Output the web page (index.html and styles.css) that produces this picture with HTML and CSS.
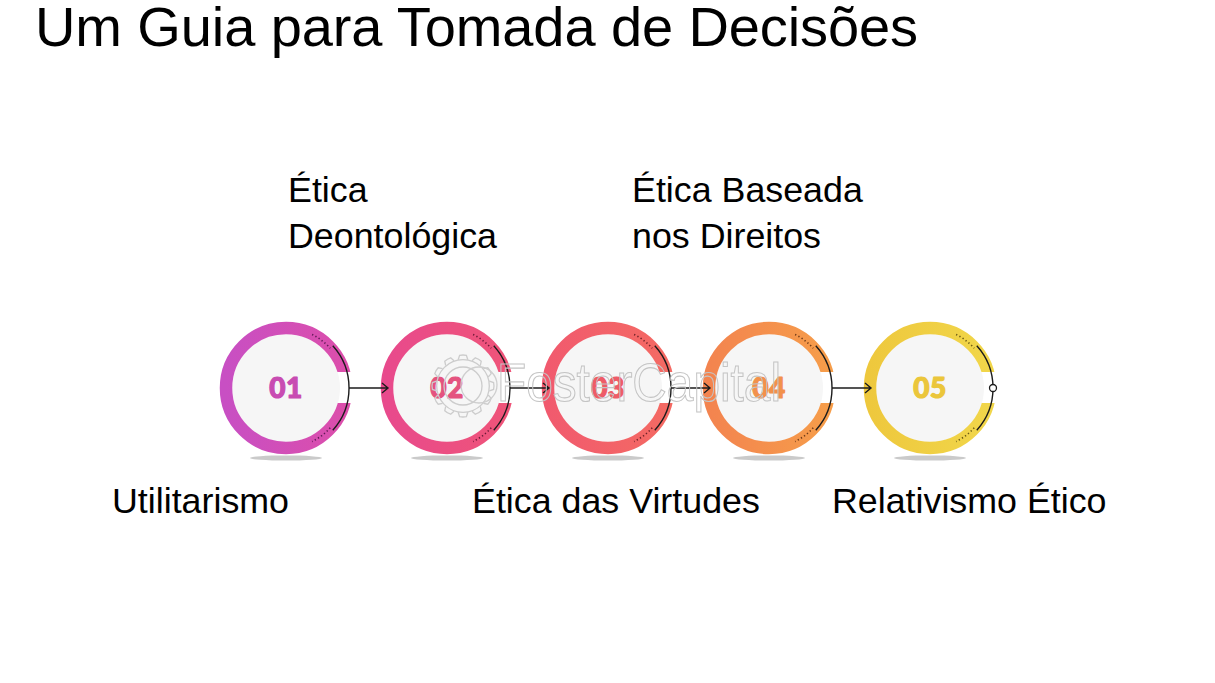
FILE: index.html
```html
<!DOCTYPE html>
<html lang="pt">
<head>
<meta charset="utf-8">
<title>Um Guia para Tomada de Decisões</title>
<link rel="stylesheet" href="styles.css">
</head>
<body>
<svg class="defs" width="0" height="0" aria-hidden="true">
  <defs>
    <linearGradient id="g1" x1="0" x2="1" y1="0" y2="0"><stop offset="0" stop-color="#c84fc3"/><stop offset="1" stop-color="#dc4eab"/></linearGradient>
    <linearGradient id="g2" x1="0" x2="1" y1="0" y2="0"><stop offset="0" stop-color="#e84a8c"/><stop offset="1" stop-color="#ef5479"/></linearGradient>
    <linearGradient id="g3" x1="0" x2="1" y1="0" y2="0"><stop offset="0" stop-color="#f15a6e"/><stop offset="1" stop-color="#f46a63"/></linearGradient>
    <linearGradient id="g4" x1="0" x2="1" y1="0" y2="0"><stop offset="0" stop-color="#f3844f"/><stop offset="1" stop-color="#f69d4a"/></linearGradient>
    <linearGradient id="g5" x1="0" x2="1" y1="0" y2="0"><stop offset="0" stop-color="#eec83d"/><stop offset="1" stop-color="#f1d64a"/></linearGradient>
    <mask id="gap" maskUnits="userSpaceOnUse" x="-40" y="0" width="220" height="150">
      <rect x="-40" y="0" width="220" height="150" fill="#fff"/>
      <rect x="100" y="52" width="40" height="31" fill="#000"/>
    </mask>
    <path id="tooth" d="M-4.8 -26.3 L-3.4 -30.6 Q0 -31.4 3.4 -30.6 L4.8 -26.3"/>
  </defs>
</svg>

<h1 class="title">Um Guia para Tomada de Decisões</h1>

<section class="diagram">
  <div class="labels labels-top">
    <div class="label">Ética<br>Deontológica</div>
    <div class="label">Ética Baseada<br>nos Direitos</div>
  </div>

  <div class="steps">
    <svg class="step" width="161" height="150" viewBox="0 0 161 150">
      <ellipse class="shadow" cx="66" cy="138" rx="36" ry="2.6"/>
      <circle class="inner" cx="66" cy="68" r="54"/>
      <circle class="ring" cx="66" cy="68" r="60" stroke="url(#g1)" mask="url(#gap)"/>
      <path class="dots d1" d="M92.1 14.5 A59.5 59.5 0 0 1 110.2 28.2 M110.2 107.8 A59.5 59.5 0 0 1 92.1 121.5"/>
      <path class="arc" d="M112.8 25.8 A63 63 0 0 1 112.8 110.2"/>
      <text class="num n1" x="66" y="78">01</text>
    </svg>
    <svg class="step" width="161" height="150" viewBox="0 0 161 150">
      <ellipse class="shadow" cx="66" cy="138" rx="36" ry="2.6"/>
      <circle class="inner" cx="66" cy="68" r="54"/>
      <circle class="ring" cx="66" cy="68" r="60" stroke="url(#g2)" mask="url(#gap)"/>
      <path class="dots d2" d="M92.1 14.5 A59.5 59.5 0 0 1 110.2 28.2 M110.2 107.8 A59.5 59.5 0 0 1 92.1 121.5"/>
      <path class="arc" d="M112.8 25.8 A63 63 0 0 1 112.8 110.2"/>
      <path class="arrow" d="M-32 68 H7 M1 63 L7 68 L1 73"/>
      <text class="num n2" x="66" y="78">02</text>
    </svg>
    <svg class="step" width="161" height="150" viewBox="0 0 161 150">
      <ellipse class="shadow" cx="66" cy="138" rx="36" ry="2.6"/>
      <circle class="inner" cx="66" cy="68" r="54"/>
      <circle class="ring" cx="66" cy="68" r="60" stroke="url(#g3)" mask="url(#gap)"/>
      <path class="dots d3" d="M92.1 14.5 A59.5 59.5 0 0 1 110.2 28.2 M110.2 107.8 A59.5 59.5 0 0 1 92.1 121.5"/>
      <path class="arc" d="M112.8 25.8 A63 63 0 0 1 112.8 110.2"/>
      <path class="arrow" d="M-32 68 H7 M1 63 L7 68 L1 73"/>
      <text class="num n3" x="66" y="78">03</text>
    </svg>
    <svg class="step" width="161" height="150" viewBox="0 0 161 150">
      <ellipse class="shadow" cx="66" cy="138" rx="36" ry="2.6"/>
      <circle class="inner" cx="66" cy="68" r="54"/>
      <circle class="ring" cx="66" cy="68" r="60" stroke="url(#g4)" mask="url(#gap)"/>
      <path class="dots d4" d="M92.1 14.5 A59.5 59.5 0 0 1 110.2 28.2 M110.2 107.8 A59.5 59.5 0 0 1 92.1 121.5"/>
      <path class="arc" d="M112.8 25.8 A63 63 0 0 1 112.8 110.2"/>
      <path class="arrow" d="M-32 68 H7 M1 63 L7 68 L1 73"/>
      <text class="num n4" x="66" y="78">04</text>
    </svg>
    <svg class="step" width="161" height="150" viewBox="0 0 161 150">
      <ellipse class="shadow" cx="66" cy="138" rx="36" ry="2.6"/>
      <circle class="inner" cx="66" cy="68" r="54"/>
      <circle class="ring" cx="66" cy="68" r="60" stroke="url(#g5)" mask="url(#gap)"/>
      <path class="dots d5" d="M92.1 14.5 A59.5 59.5 0 0 1 110.2 28.2 M110.2 107.8 A59.5 59.5 0 0 1 92.1 121.5"/>
      <path class="arc" d="M112.8 25.8 A63 63 0 0 1 112.8 110.2"/>
      <path class="arrow" d="M-32 68 H7 M1 63 L7 68 L1 73"/>
      <circle class="end" cx="129" cy="68" r="3.5"/>
      <text class="num n5" x="66" y="78">05</text>
    </svg>

    <svg class="watermark" width="360" height="80" viewBox="0 0 360 80" aria-hidden="true">
      <g class="gear" transform="translate(26 35)">
        <circle r="26.3"/>
        <use href="#tooth"/>
        <use href="#tooth" transform="rotate(30)"/>
        <use href="#tooth" transform="rotate(60)"/>
        <use href="#tooth" transform="rotate(90)"/>
        <use href="#tooth" transform="rotate(120)"/>
        <use href="#tooth" transform="rotate(150)"/>
        <use href="#tooth" transform="rotate(180)"/>
        <use href="#tooth" transform="rotate(210)"/>
        <use href="#tooth" transform="rotate(240)"/>
        <use href="#tooth" transform="rotate(270)"/>
        <use href="#tooth" transform="rotate(300)"/>
        <use href="#tooth" transform="rotate(330)"/>
        <circle r="19"/>
      </g>
      <circle class="wm-line" cx="42" cy="34" r="18"/>
      <text class="wm-text" x="60" y="50" textLength="284" lengthAdjust="spacingAndGlyphs">FosterCapital</text>
    </svg>
  </div>

  <div class="labels labels-bottom">
    <div class="label">Utilitarismo</div>
    <div class="label">Ética das Virtudes</div>
    <div class="label">Relativismo Ético</div>
  </div>
</section>
</body>
</html>
```

FILE: styles.css
```css
html, body {
  margin: 0;
  padding: 0;
  background: #ffffff;
}

body {
  font-family: "Liberation Sans", Arial, Helvetica, sans-serif;
  color: #000;
  width: 1215px;
  height: 683px;
  overflow: hidden;
}

.defs {
  position: absolute;
  width: 0;
  height: 0;
}

.title {
  margin: 0;
  padding-left: 35px;
  font-size: 56px;
  line-height: 53px;
  font-weight: 400;
  letter-spacing: -0.1px;
}

.diagram {
  display: flex;
  flex-direction: column;
}

.labels {
  display: grid;
  font-size: 35.8px;
  line-height: 46px;
}

.labels-top {
  margin-top: 114px;
  padding-left: 288px;
  grid-template-columns: repeat(2, 344px);
}

.labels-bottom {
  margin-top: 8px;
  padding-left: 112px;
  grid-template-columns: repeat(3, 360px);
}

.steps {
  position: relative;
  display: flex;
  margin-top: 61px;
  padding-left: 220px;
  height: 150px;
}

.step {
  display: block;
  overflow: visible;
  flex: none;
}

.shadow {
  fill: #bdbdbd;
  opacity: 0.8;
}

.inner {
  fill: #f6f6f6;
}

.ring {
  fill: none;
  stroke-width: 12.5;
}

.dots {
  fill: none;
  stroke-width: 1.6;
  stroke-dasharray: 1.3 2.4;
}

.d1 { stroke: #5e1a56; }
.d2 { stroke: #6b1a38; }
.d3 { stroke: #6e2228; }
.d4 { stroke: #6e3a18; }
.d5 { stroke: #6a5a14; }

.arc,
.arrow {
  fill: none;
  stroke: #1c1c1c;
  stroke-width: 1.4;
}

.end {
  fill: #fff;
  stroke: #1c1c1c;
  stroke-width: 1.3;
}

.num {
  font-family: Lato, "Open Sans", sans-serif;
  font-weight: 900;
  font-size: 28px;
  text-anchor: middle;
  letter-spacing: 0.5px;
  stroke-width: 1.2px;
  stroke-linejoin: round;
}

.n1 { fill: #c84cb2; stroke: #c84cb2; }
.n2 { fill: #e4537f; stroke: #e4537f; }
.n3 { fill: #ee5c67; stroke: #ee5c67; }
.n4 { fill: #f2914b; stroke: #f2914b; }
.n5 { fill: #ebc63b; stroke: #ebc63b; }

.watermark {
  position: absolute;
  left: 437px;
  top: 31px;
  overflow: visible;
  pointer-events: none;
}

.gear {
  fill: none;
  stroke: #cccccc;
  stroke-width: 1.3;
}

.wm-line {
  fill: none;
  stroke: #cfcfcf;
  stroke-width: 1.3;
}

.wm-text {
  font-family: "Liberation Sans", Arial, sans-serif;
  font-size: 54px;
  fill: none;
  stroke: #c4c4c4;
  stroke-width: 1.1;
}
```
